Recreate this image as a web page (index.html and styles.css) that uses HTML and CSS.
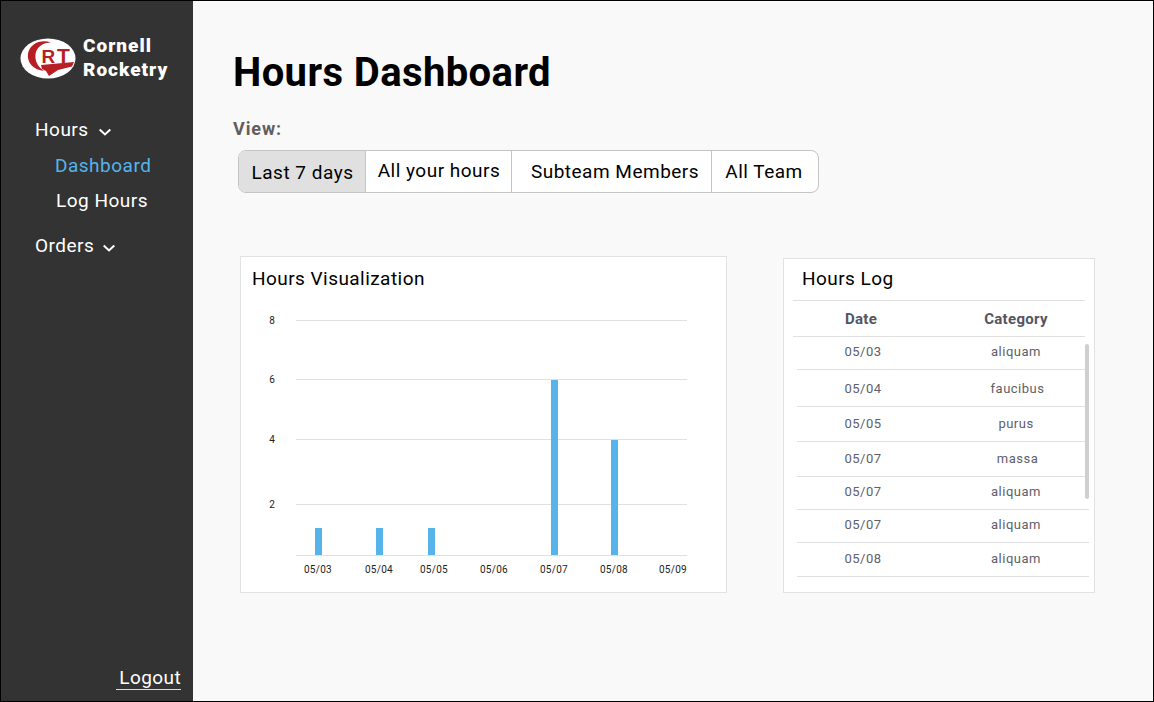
FILE: index.html
```html
<!DOCTYPE html>
<html lang="en">
<head>
<meta charset="utf-8">
<title>Hours Dashboard</title>
<link rel="stylesheet" href="styles.css">
</head>
<body>
<div class="app">
  <aside class="sidebar">
    <div class="brand">
      <svg class="logo" width="56" height="41" viewBox="0 0 56 41">
        <ellipse cx="28" cy="20.500" rx="27.500" ry="20" fill="#fff"/>
        <path d="M31 4.500C21 1 10 5.500 8 15.500C6.500 25 14 32 24 33C19 29.500 14.500 24 15.500 16C16.500 9 23 4.500 31 4.500Z" fill="#b81f25"/>
        <text x="21.500" y="25" class="logo-r">R</text>
        <text x="37" y="24.500" class="logo-t">T</text>
        <path d="M21 27L54 24L52 28.500L38 32L29 38L26 33L22 31Z" fill="#b81f25"/>
      </svg>
      <div class="brand-name">Cornell<br>Rocketry</div>
    </div>
    <nav class="nav">
      <a class="nav-top">Hours
        <svg class="chev" width="12" height="8" viewBox="0 0 12 8"><path d="M.7 1.500L6 6.500L11.300 1.500" fill="none" stroke="#fff" stroke-width="2"/></svg>
      </a>
      <a class="nav-sub active">Dashboard</a>
      <a class="nav-sub second">Log Hours</a>
      <a class="nav-top orders">Orders
        <svg class="chev" width="12" height="8" viewBox="0 0 12 8"><path d="M.7 1.500L6 6.500L11.300 1.500" fill="none" stroke="#fff" stroke-width="2"/></svg>
      </a>
    </nav>
    <a class="logout">Logout</a>
  </aside>
  <main class="main">
    <h1>Hours Dashboard</h1>
    <div class="view-label">View:</div>
    <div class="tabs">
      <div class="tab tab-1 selected">Last 7 days</div>
      <div class="tab tab-2">All your hours</div>
      <div class="tab tab-3">Subteam Members</div>
      <div class="tab tab-4">All Team</div>
    </div>
    <div class="cards">
      <section class="card chart-card">
        <h2>Hours Visualization</h2>
        <svg class="chart" width="485" height="290" viewBox="0 0 485 290">
          <g class="grid">
            <line x1="55" x2="446" y1="30.500" y2="30.500"/>
            <line x1="55" x2="446" y1="89.500" y2="89.500"/>
            <line x1="55" x2="446" y1="149.500" y2="149.500"/>
            <line x1="55" x2="446" y1="214.500" y2="214.500"/>
            <line x1="55" x2="446" y1="265.500" y2="265.500"/>
          </g>
          <g class="bars">
            <rect x="74" y="238" width="7" height="27"/>
            <rect x="135" y="238" width="7" height="27"/>
            <rect x="187" y="238" width="7" height="27"/>
            <rect x="310" y="90" width="7" height="175"/>
            <rect x="370" y="150" width="7" height="115"/>
          </g>
          <g class="ylabels">
            <text x="31" y="34">8</text>
            <text x="31" y="93">6</text>
            <text x="31" y="153">4</text>
            <text x="31" y="218">2</text>
          </g>
          <g class="xlabels">
            <text x="77" y="283">05/03</text>
            <text x="138" y="283">05/04</text>
            <text x="193" y="283">05/05</text>
            <text x="253" y="283">05/06</text>
            <text x="313" y="283">05/07</text>
            <text x="373" y="283">05/08</text>
            <text x="432" y="283">05/09</text>
          </g>
        </svg>
      </section>
      <section class="card log-card">
        <h2>Hours Log</h2>
        <div class="log-head">
          <span class="col-date">Date</span>
          <span class="col-cat">Category</span>
        </div>
        <div class="log-body">
          <div class="row r1"><span class="col-date">05/03</span><span class="col-cat">aliquam</span></div>
          <div class="row r2"><span class="col-date">05/04</span><span class="col-cat nudge">faucibus</span></div>
          <div class="row r3"><span class="col-date">05/05</span><span class="col-cat">purus</span></div>
          <div class="row r4"><span class="col-date">05/07</span><span class="col-cat nudge">massa</span></div>
          <div class="row r1"><span class="col-date">05/07</span><span class="col-cat">aliquam</span></div>
          <div class="row r1"><span class="col-date">05/07</span><span class="col-cat">aliquam</span></div>
          <div class="row r7"><span class="col-date">05/08</span><span class="col-cat">aliquam</span></div>
          <div class="scrollbar"></div>
        </div>
      </section>
    </div>
  </main>
</div>
</body>
</html>
```
FILE: styles.css
```css
* { box-sizing: border-box; }
html, body { margin: 0; padding: 0; height: 100%; }
body {
  font-family: Roboto, "Liberation Sans", sans-serif;
  border: 1px solid #000;
  background: #f9f9f9;
  overflow: hidden;
}
.app { display: flex; height: 700px; }
.sidebar {
  width: 192px;
  flex: none;
  background: #333;
  color: #fff;
  display: flex;
  flex-direction: column;
  padding: 33px 12px 11px 19px;
}
.brand { display: flex; align-items: center; gap: 7px; }
.logo { flex: none; margin-top: 1px; }
.logo-r { font: 700 19px "Liberation Sans", sans-serif; fill: #b81f25; }
.logo-t { font: 700 21px "Liberation Sans", sans-serif; fill: #b81f25; }
.brand-name { font-size: 19px; font-weight: 900; line-height: 24px; letter-spacing: 1px; }
.nav { display: flex; flex-direction: column; margin-top: 29px; padding-left: 15px; font-size: 19px; letter-spacing: 0.5px; }
.nav-top { display: flex; align-items: center; gap: 10px; height: 37px; }
.chev { margin-top: 5px; }
.nav-sub { padding-left: 20px; height: 35px; line-height: 35px; }
.nav-sub.active { color: #56b4ea; }
.nav-sub.second { padding-left: 21px; }
.orders { margin-top: 9px; gap: 9px; }
.logout {
  margin-top: auto;
  align-self: flex-end;
  font-size: 19px;
  letter-spacing: 0.4px;
  line-height: 22px;
  padding: 0 0 0 3px;
  border-bottom: 1px solid #ddd;
}
.main { flex: 1; padding: 48px 0 0 40px; }
h1 { margin: 0; font-size: 40px; line-height: 47px; font-weight: 700; color: #000; letter-spacing: 0.4px; }
.view-label { margin-top: 22px; font-size: 18px; line-height: 21px; font-weight: 700; color: #635e5e; letter-spacing: 0.9px; }
.tabs {
  display: flex;
  width: 581px;
  height: 43px;
  margin: 11px 0 0 5px;
  background: #fff;
  border: 1px solid #c4c4c4;
  border-radius: 8px;
  font-size: 19px;
  letter-spacing: 0.5px;
  color: #000;
  overflow: hidden;
}
.tab { border-right: 1px solid #c4c4c4; display: flex; justify-content: center; }
.tab-1 { width: 127px; line-height: 43px; padding-left: 1px; }
.tab-2 { width: 146px; line-height: 39px; padding-left: 1px; }
.tab-3 { width: 200px; line-height: 41px; padding-left: 7px; }
.tab-4 { flex: 1; border-right: 0; line-height: 41px; padding-right: 2px; }
.selected { background: #e0e0e0; }
.cards { display: flex; align-items: flex-start; margin: 63px 0 0 7px; }
.card { background: #fff; border: 1px solid #e2e2e2; }
h2 { margin: 0; font-size: 19px; font-weight: 400; line-height: 21px; color: #000; letter-spacing: 0.45px; }
.chart-card { width: 487px; height: 337px; padding: 11px 0 0 0; }
.chart-card h2 { padding-left: 11px; height: 22px; }
.chart { display: block; }
.grid line { stroke: #e0e0e0; stroke-width: 1; }
.bars rect { fill: #56b4ea; }
.ylabels text { font-size: 10px; text-anchor: middle; fill: #222; }
.xlabels text { font-size: 10px; text-anchor: middle; fill: #222; letter-spacing: 0.3px; }
.log-card { width: 312px; height: 335px; margin: 2px 0 0 56px; padding: 9px 9px 0; }
.log-card h2 { padding-left: 9px; height: 32px; }
.log-head {
  display: flex;
  height: 37px;
  align-items: center;
  border-top: 1px solid #e0e0e0;
  border-bottom: 1px solid #e0e0e0;
  font-size: 15px;
  font-weight: 700;
  color: #555560;
  letter-spacing: 0.3px;
}
.col-date { flex: none; width: 136px; text-align: center; }
.col-cat { flex: none; width: 174px; text-align: center; }
.log-body { position: relative; margin-left: 4px; width: 292px; font-size: 13px; color: #60606a; letter-spacing: 0.5px; }
.row { display: flex; border-bottom: 1px solid #e0e0e0; }
.row .col-date { width: 132px; }
.row .col-cat { width: 174px; }
.row .nudge { padding-left: 3px; }
.r1 { height: 33px; line-height: 29px; }
.r2 { height: 37px; line-height: 37px; }
.r3 { height: 35px; line-height: 34px; }
.r4 { height: 35px; line-height: 34px; }
.r7 { height: 34px; line-height: 31px; }
.scrollbar {
  position: absolute;
  top: 7px;
  right: 0;
  width: 4px;
  height: 155px;
  background: #cfcfcf;
  border-radius: 2px;
}
```
